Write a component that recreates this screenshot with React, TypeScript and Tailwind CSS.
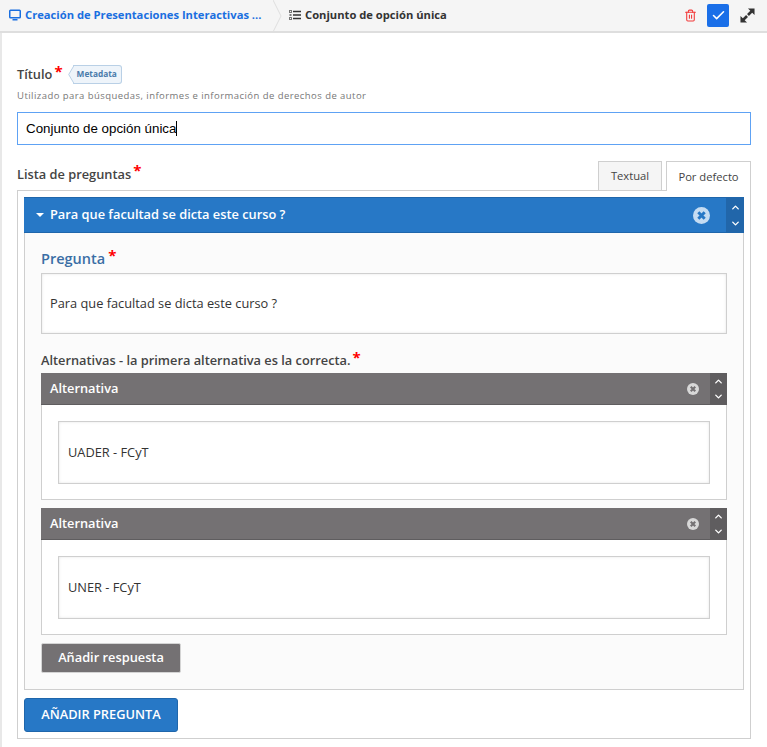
import { ChevronUp, ChevronDown, Check, Trash2 } from 'lucide-react';

function Star({ className = '' }: { className?: string }) {
  return <span className={`text-[#f00] font-bold leading-none relative -top-[4px] text-[15px] ${className}`}>*</span>;
}

function RemoveIcon({ size, color, cross }: { size: number; color: string; cross: string }) {
  return (
    <svg width={size} height={size} viewBox="0 0 16 16">
      <circle cx="8" cy="8" r="8" fill={color} />
      <path d="M5 5l6 6M11 5l-6 6" stroke={cross} strokeWidth="2.8" />
    </svg>
  );
}

function Alternativa({ text }: { text: string }) {
  return (
    <div className="border border-[#cfcfcf] border-t-0 bg-white">
      <div className="flex items-stretch h-[32px] -mx-px bg-[#747173] border-b border-[#5f5d5f] text-white">
        <div className="flex-1 flex items-center pl-[9px] pt-[1px] text-[12.8px] font-semibold">Alternativa</div>
        <div className="flex items-center pr-[11px]">
          <RemoveIcon size={12} color="#d8d8d8" cross="#747173" />
        </div>
        <div className="w-[17px] bg-[#5f5d5f] flex flex-col items-center justify-center">
          <ChevronUp size={11} strokeWidth={3} />
          <ChevronDown size={11} strokeWidth={3} className="mt-[4px]" />
        </div>
      </div>
      <div className="px-[16px] pt-[16px] pb-[15px]">
        <div className="h-[63px] border border-[#cfcfcf] shadow-[inset_0_0_3px_#e4e4e4] flex items-center px-[9px] text-[12.8px] text-[#333]">{text}</div>
      </div>
    </div>
  );
}

export default function App() {
  return (
    <div className="w-[767px] h-[747px] overflow-hidden bg-white font-['Open_Sans',sans-serif] text-[#444]">
      <div className="h-[33px] bg-[#f5f5f5] border-b-2 border-[#dedede] flex items-center relative">
        <div className="w-[275px] flex items-center pl-[9px] text-[11.2px] font-bold text-[#1a6fe0] gap-[4px] whitespace-nowrap">
          <svg width="12" height="12" viewBox="0 0 12 12">
            <rect x="0.75" y="1.25" width="10.5" height="7.5" rx="0.8" fill="none" stroke="currentColor" strokeWidth="1.5" />
            <path d="M3.5 10.75h5" stroke="currentColor" strokeWidth="1.5" />
          </svg>
          <span>Creación de Presentaciones Interactivas ...</span>
        </div>
        <svg width="9" height="32" viewBox="0 0 9 32" className="absolute left-[273px] top-0">
          <path d="M0 0L8 16L0 32" fill="none" stroke="#dedede" />
        </svg>
        <div className="flex items-center pl-[14px] gap-[4px] text-[11.2px] font-bold text-[#333] flex-1">
          <svg width="12" height="10" viewBox="0 0 12 10">
            <rect x="0.5" y="0.5" width="2" height="2" fill="none" stroke="#777" />
            <rect x="0.5" y="4" width="2" height="2" fill="#777" />
            <rect x="0.5" y="7.5" width="2" height="2" fill="none" stroke="#777" />
            <path d="M4 1.5h8M4 5h8M4 8.5h8" stroke="#333" strokeWidth="1.3" />
          </svg>
          <span>Conjunto de opción única</span>
        </div>
        <Trash2 size={13} className="text-[#f23b3b] mr-[10px]" strokeWidth={2} />
        <div className="w-[22px] h-[23px] bg-[#1a6fe8] rounded-[2px] flex items-center justify-center mr-[11px]">
          <Check size={15} className="text-white" strokeWidth={2.5} />
        </div>
        <svg width="15" height="15" viewBox="0 0 16 16" className="mr-[12px]">
          <path d="M8.5 0.5H15.5V7.5L13 5L9.5 8.5L7.5 6.5L11 3ZM7.5 15.5H0.5V8.5L3 11L6.5 7.5L8.5 9.5L5 13Z" fill="#333" />
        </svg>
      </div>

      <div className="h-[714px] border-l-2 border-[#e8e8e8] pl-[15px] pr-[16px]">
        <div className="pt-[30px] flex items-center h-[54px]">
          <span className="text-[12.8px] font-semibold">Título</span>
          <Star className="ml-[2px]" />
          <span className="relative -top-[1px] ml-[10px] h-[19px] border border-l-0 border-[#b9d0e6] rounded-r-[3px] bg-[#eef4fa] pl-[4px] pr-[4px] flex items-center text-[8.3px] font-bold text-[#4a7bab]">
            <svg width="6" height="19" viewBox="0 0 6 19" className="absolute -left-[5px] -top-px">
              <path d="M6 0.5L0.7 9.5L6 18.5" fill="#eef4fa" stroke="#b9d0e6" />
            </svg>
            <span className="relative">Metadata</span>
          </span>
        </div>
        <div className="text-[9.5px] tracking-[0.45px] text-[#777] mt-[2px] h-[14px] leading-[14px] whitespace-nowrap">Utilizado para búsquedas, informes e información de derechos de autor</div>
        <div className="mt-[9px] h-[33px] border border-[#5ea2f4] flex items-center pl-[8px] text-[13.33px] text-black font-['Liberation_Sans',sans-serif]">
          Conjunto de opción única<span className="inline-block w-px h-[15px] bg-black" />
        </div>

        <div className="mt-[15px] h-[30px] flex items-end relative">
          <div className="flex-1 self-start h-[29px] flex items-center text-[12.8px] font-semibold">
            Lista de preguntas<Star className="ml-[2px]" />
          </div>
          <div className="w-[64px] h-[29px] border border-b-0 border-[#cfcfcf] bg-[#f5f5f5] flex items-center justify-center text-[11.2px] mr-[4px]">Textual</div>
          <div className="w-[85px] h-[30px] border border-b-0 border-[#cfcfcf] bg-white flex items-center justify-center text-[11.2px] relative top-px z-10 pt-[2px]">Por defecto</div>
        </div>

        <div className="border border-[#cfcfcf] h-[549px] px-[6px] pt-[6px]">
          <div className="border border-[#cfcfcf] border-t-0 bg-[#fbfbfb] h-[493px]">
            <div className="h-[36px] -mx-px flex items-stretch bg-[#2778c6] border-y border-[#1f66ab] text-white">
              <div className="flex-1 flex items-center pl-[12px] text-[12.8px] font-semibold gap-[6px]">
                <span className="w-0 h-0 border-x-[4px] border-x-transparent border-t-[4px] border-t-white" />
                Para que facultad se dicta este curso ?
              </div>
              <div className="flex items-center pr-[16px]">
                <RemoveIcon size={17} color="#c5dcf2" cross="#2778c6" />
              </div>
              <div className="w-[18px] bg-[#2166aa] flex flex-col items-center justify-center">
                <ChevronUp size={11} strokeWidth={3} />
                <ChevronDown size={11} strokeWidth={3} className="mt-[5px]" />
              </div>
            </div>

            <div className="px-[16px]">
              <div className="pt-[13px] h-[39px] mb-[1px] flex items-center text-[14.5px] font-semibold text-[#3a6ea5]">
                Pregunta<Star className="ml-[3px]" />
              </div>
              <div className="h-[61px] border border-[#cfcfcf] shadow-[inset_0_0_3px_#e4e4e4] bg-white flex items-center px-[8px] text-[12.8px] text-[#333]">Para que facultad se dicta este curso ?</div>
              <div className="mt-[15px] h-[24px] flex items-center text-[12.8px] font-semibold">
                Alternativas - la primera alternativa es la correcta.<Star className="ml-[2px]" />
              </div>
              <div className="flex flex-col gap-[8px]">
                <Alternativa text="UADER - FCyT" />
                <Alternativa text="UNER - FCyT" />
              </div>
              <div className="mt-[8px] w-[140px] h-[30px] rounded-[2px] bg-[#747173] border border-[#d4d4d4] flex items-center justify-center text-white text-[12.8px] font-semibold">Añadir respuesta</div>
            </div>
          </div>
          <div className="mt-[8px] w-[154px] h-[34px] rounded-[3px] bg-[#2778c6] border border-[#1f66ab] flex items-center justify-center text-white text-[12.8px] font-semibold">AÑADIR PREGUNTA</div>
        </div>
      </div>
    </div>
  );
}
